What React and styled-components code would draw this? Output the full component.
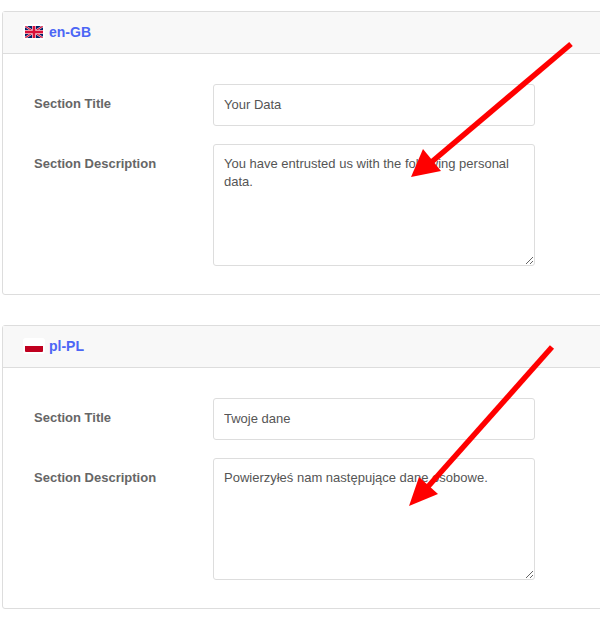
import styled, { createGlobalStyle } from "styled-components";

const GlobalStyle = createGlobalStyle`
  html, body {
    margin: 0;
    padding: 0;
    background: #fff;
    overflow: hidden;
  }
  body {
    font-family: "Liberation Sans", Arial, sans-serif;
  }
`;

const Page = styled.div`
  position: relative;
  width: 600px;
  height: 637px;
  overflow: hidden;
  box-sizing: border-box;
  padding: 11px 0 0 2px;
  display: flex;
  flex-direction: column;
  gap: 30px;
`;

const Card = styled.section`
  width: 640px;
  box-sizing: border-box;
  border: 1px solid #dddddd;
  border-radius: 3px;
  background: #fff;
`;

const CardHeader = styled.header`
  height: 42px;
  box-sizing: border-box;
  display: flex;
  align-items: center;
  gap: 6px;
  padding: 0 0 1px 22px;
  background: #f8f8f8;
  border-bottom: 1px solid #dddddd;
`;

const FlagBox = styled.span`
  display: flex;
  width: 18px;
  height: 12px;
  outline: 2px solid #ffffff;
  border-radius: 1px;
`;

const LangCode = styled.span`
  font-size: 14px;
  font-weight: 700;
  color: #4c66f5;
`;

const CardBody = styled.div`
  padding: 30px 0 28px 31px;
  display: flex;
  flex-direction: column;
  gap: 18px;
`;

const Row = styled.div`
  display: grid;
  grid-template-columns: 179px 322px;
  align-items: start;
`;

const Label = styled.label`
  padding-top: 12px;
  font-size: 13px;
  line-height: 15px;
  font-weight: 700;
  color: #666666;
`;

const TextInput = styled.input`
  width: 100%;
  height: 42px;
  box-sizing: border-box;
  padding: 0 10px 1px;
  border: 1px solid #dddddd;
  border-radius: 3px;
  font-family: inherit;
  font-size: 13px;
  color: #555555;
  outline: none;
`;

const TextArea = styled.textarea`
  display: block;
  width: 100%;
  height: 122px;
  box-sizing: border-box;
  padding: 10px;
  margin: 0;
  border: 1px solid #dddddd;
  border-radius: 3px;
  font-family: inherit;
  font-size: 13px;
  line-height: 18px;
  color: #555555;
  outline: none;
`;

const ArrowLayer = styled.svg`
  position: absolute;
  left: 0;
  top: 0;
  pointer-events: none;
`;

const UkFlag = () => (
  <svg width="18" height="12" viewBox="0 0 60 40">
    <rect width="60" height="40" fill="#012169" />
    <path d="M0 0L60 40M60 0L0 40" stroke="#fff" strokeWidth="7" />
    <path d="M0 0L60 40M60 0L0 40" stroke="#d8103a" strokeWidth="4" />
    <path d="M30 0V40M0 20H60" stroke="#f4c6cf" strokeWidth="13" />
    <path d="M30 0V40M0 20H60" stroke="#d8103a" strokeWidth="8" />
  </svg>
);

const PlFlag = () => (
  <svg width="18" height="12" viewBox="0 0 18 12">
    <rect width="18" height="6" fill="#ffffff" />
    <rect y="6" width="18" height="6" fill="#c0001f" />
  </svg>
);

const sections = [
  {
    code: "en-GB",
    Flag: UkFlag,
    title: "Your Data",
    description: "You have entrusted us with the following personal data.",
  },
  {
    code: "pl-PL",
    Flag: PlFlag,
    title: "Twoje dane",
    description: "Powierzyłeś nam następujące dane osobowe.",
  },
];

export default function App() {
  return (
    <>
      <GlobalStyle />
      <Page>
        {sections.map(({ code, Flag, title, description }) => (
          <Card key={code}>
            <CardHeader>
              <FlagBox>
                <Flag />
              </FlagBox>
              <LangCode>{code}</LangCode>
            </CardHeader>
            <CardBody>
              <Row>
                <Label>Section Title</Label>
                <TextInput defaultValue={title} />
              </Row>
              <Row>
                <Label>Section Description</Label>
                <TextArea defaultValue={description} />
              </Row>
            </CardBody>
          </Card>
        ))}
        <ArrowLayer width="600" height="637" viewBox="0 0 600 637">
          <path d="M571 44L428 165" stroke="#ff0000" strokeWidth="5.5" />
          <path d="M411 177L423 149L441 171Z" fill="#ff0000" />
          <path d="M552 347L425 490" stroke="#ff0000" strokeWidth="5.5" />
          <path d="M409 506L419 477L438 494Z" fill="#ff0000" />
        </ArrowLayer>
      </Page>
    </>
  );
}
